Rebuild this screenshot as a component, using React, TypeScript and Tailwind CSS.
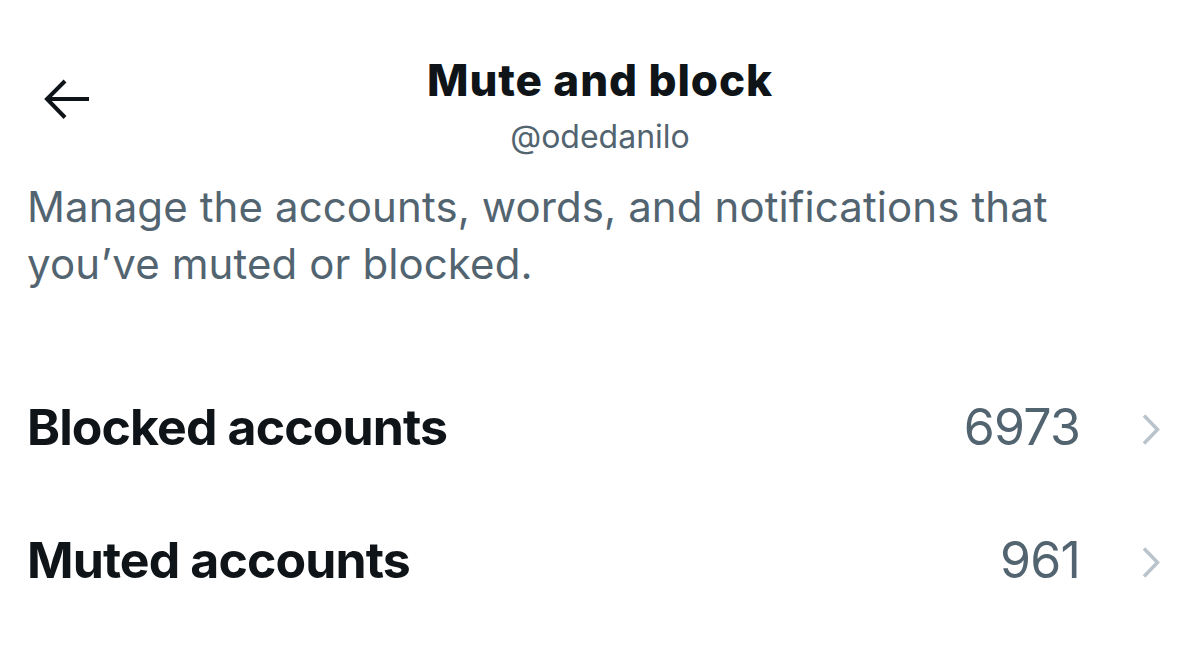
import React from "react";

const font = { fontFamily: "Inter, 'Liberation Sans', sans-serif" };

function BackArrow() {
  return (
    <svg width="48" height="42" viewBox="0 0 48 42" fill="none" className="block">
      <path d="M46 20H4" stroke="#0f1419" strokeWidth="4" />
      <path d="M22 2L4 20L22 38.5" stroke="#0f1419" strokeWidth="4" />
    </svg>
  );
}

function Chevron() {
  return (
    <svg width="18" height="31" viewBox="0 0 18 31" fill="none" className="block">
      <path d="M2 1.5L15.5 15.5L2 29.5" stroke="#b9c3cc" strokeWidth="3.5" />
    </svg>
  );
}

function Row({ label, count }: { label: string; count: string }) {
  return (
    <div className="flex h-[133px] items-center pl-[27px] pr-[40px]">
      <span className="flex-1 text-[50px] font-bold leading-none tracking-[-0.9px] text-[#0f1419]">
        {label}
      </span>
      <span className="text-[50px] leading-none tracking-[-0.8px] text-[#536471]">{count}</span>
      <span className="ml-[62px] mt-[6px]">
        <Chevron />
      </span>
    </div>
  );
}

export default function App() {
  return (
    <div className="h-[647px] w-[1200px] overflow-hidden bg-white" style={font}>
      <header className="grid grid-cols-[1fr_auto_1fr] pt-[54px]">
        <div className="pl-[43px] pt-[25px]">
          <BackArrow />
        </div>
        <div className="flex flex-col items-center">
          <h1 className="text-[44px] font-extrabold leading-[52px] tracking-[0.9px] text-[#0f1419]">
            Mute and block
          </h1>
          <p className="mt-[12px] text-[32px] leading-[38px] text-[#536471]">@odedanilo</p>
        </div>
        <div />
      </header>

      <p className="mt-[22px] pl-[27px] pr-[100px] text-[42px] leading-[57px] tracking-[0.1px] text-[#536471]">
        Manage the accounts, words, and notifications that you’ve muted or blocked.
      </p>

      <div className="mt-[68px]">
        <Row label="Blocked accounts" count="6973" />
        <Row label="Muted accounts" count="961" />
      </div>
    </div>
  );
}
